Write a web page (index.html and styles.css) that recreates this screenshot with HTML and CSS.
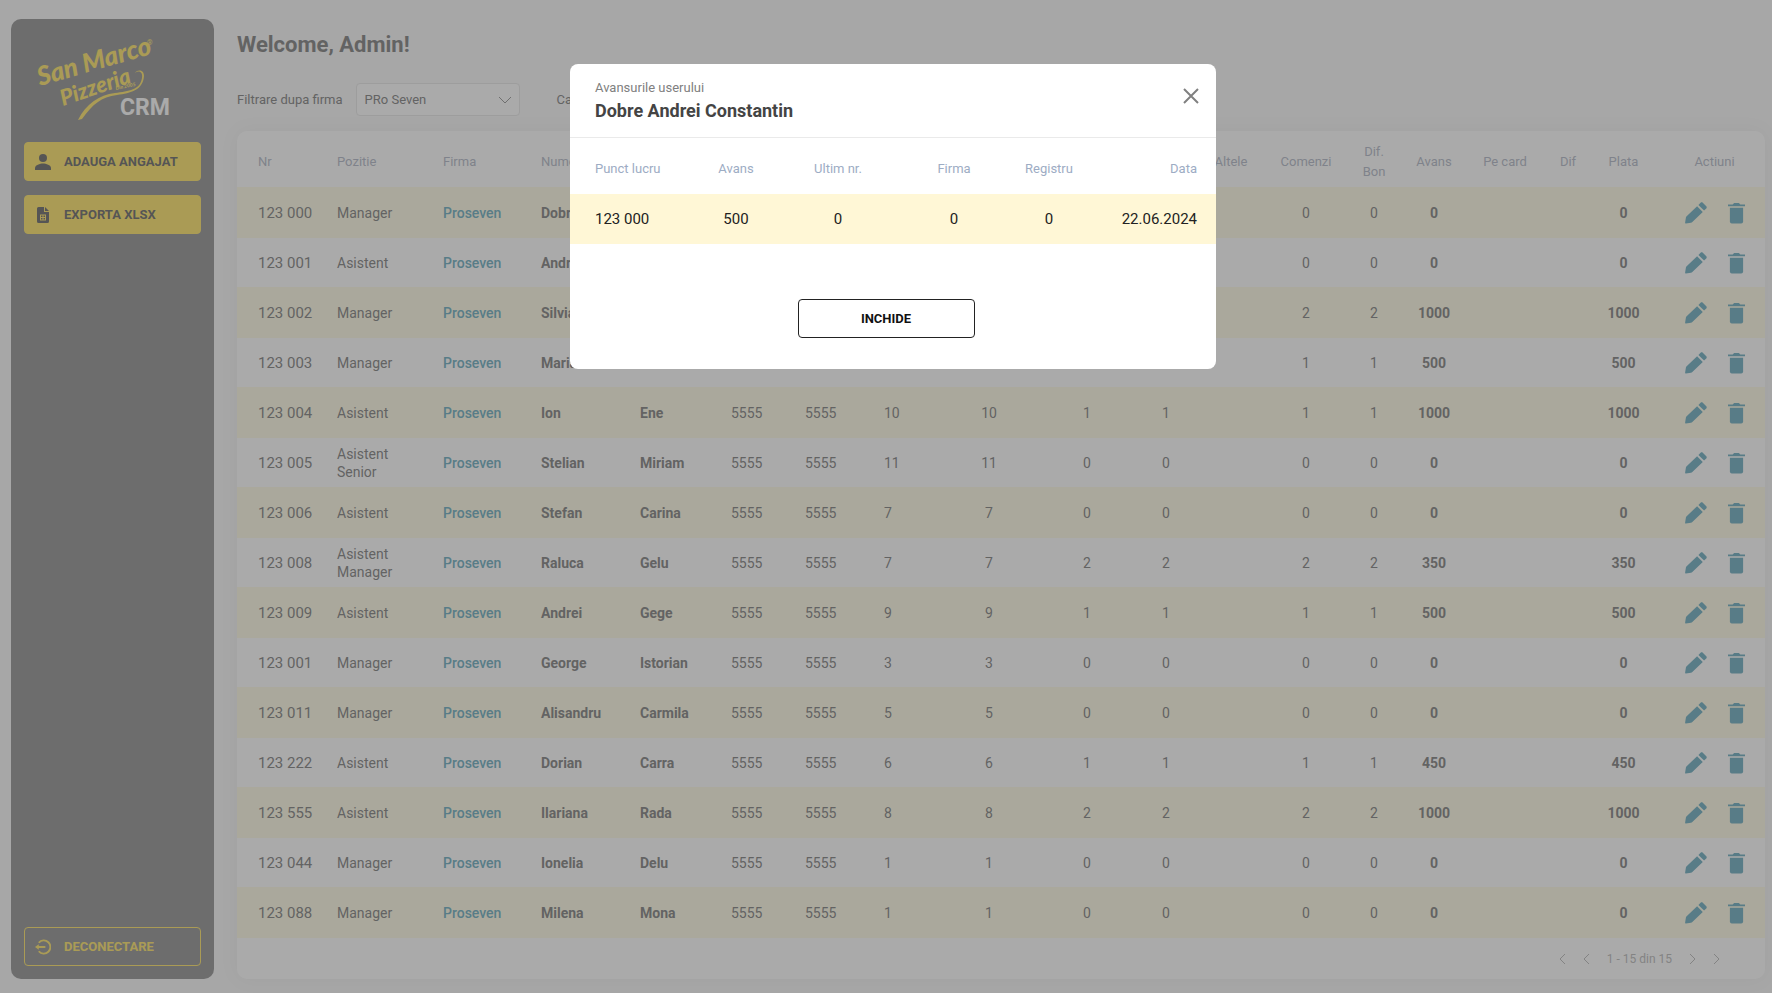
FILE: index.html
```
<!DOCTYPE html>
<html lang="ro">
<head>
  <meta charset="UTF-8" />
  <meta name="viewport" content="width=device-width, initial-scale=1.0"/>
  <title>San Marco Pizzeria CRM</title>
  <link rel="stylesheet" href="styles.css">
</head>
<body>

<!-- Icons -->
<svg class="sprite" aria-hidden="true">
  <symbol id="pencil" viewBox="0 0 24 24">
    <path d="M1 23.500c-.6.100-1-.3-.9-.9l.9-5.600c.1-.6.400-1.100.8-1.500L13.200 4.600l6.200 6.200L8 21.700c-.4.400-.9.700-1.500.8z"/>
    <path d="M14.600 3.200 17 .800c.7-.7 1.700-.7 2.400 0L23.200 4.600c.7.700.7 1.700 0 2.400l-2.400 2.400z"/>
  </symbol>
  <symbol id="trash" viewBox="0 0 18 23">
    <path d="M0 2.500h5l1.400-1.700h5.200L13 2.500h5v1.800H0z"/>
    <path d="M2 6h14v14.500a2 2 0 0 1-2 2H4a2 2 0 0 1-2-2z"/>
  </symbol>
</svg>

<div class="layout">

  <!-- Sidebar -->
  <aside class="sidebar">
    <svg class="logo" viewBox="0 0 145 90" role="img" aria-label="San Marco Pizzeria CRM">
      <text class="script big" transform="translate(10 52) rotate(-16)">San Marco</text>
      <text class="script small" transform="translate(33 72) rotate(-19)">Pizzeria</text>
      <text class="script tiny" transform="translate(86 56) rotate(-12)">Din 2005</text>
      <text class="reg" x="117" y="11">®</text>
      <path class="swoosh" d="M48 86c8-16 21-25 37-27 14-2 25-3 27-15 1-6-3-8-7-5 3-4 9-3 9 3-1 14-13 17-27 19-16 2-24 9-35 24z"/>
      <text class="crm" x="90" y="81">CRM</text>
    </svg>

    <button class="side-btn" type="button">
      <svg width="16" height="16" viewBox="0 0 16 16"><circle cx="8" cy="4" r="4"/><path d="M0 16v-2c0-3 5-4.500 8-4.500s8 1.500 8 4.500v2z"/></svg>
      Adauga angajat
    </button>
    <button class="side-btn" type="button">
      <svg width="16" height="16" viewBox="0 0 16 16"><path fill-rule="evenodd" d="M3.500 0H9v5h5v9.500a1.500 1.500 0 0 1-1.500 1.500h-9A1.500 1.500 0 0 1 2 14.500v-13A1.500 1.500 0 0 1 3.500 0zM5 7.500v6h6v-6zM6 8.500h1.500v1.500H6zM8.500 8.500H10v1.500H8.500zM6 11h1.500v1.500H6zM8.500 11H10v1.500H8.500z"/><path d="M10 0l4 4h-4z"/></svg>
      Exporta xlsx
    </button>

    <button class="side-btn logout" type="button">
      <svg width="16" height="16" viewBox="0 0 17 16"><path class="line" d="M4 3.500a7 7 0 1 1 0 9M3 8h8"/><path d="M0 8l4-3v6z"/></svg>
      Deconectare
    </button>
  </aside>

  <!-- Content -->
  <main class="content">
    <h1>Welcome, Admin!</h1>

    <form class="filters">
      <label for="firma">Filtrare dupa firma</label>
      <select id="firma">
        <option>PRo Seven</option>
      </select>
      <label class="search-label" for="cauta">Cauta</label>
      <input type="text" id="cauta" />
    </form>

    <div class="card">
      <table class="staff">
        <colgroup>
          <col class="w100"><col class="w106"><col class="w98"><col class="w99"><col class="w91">
          <col class="w74"><col class="w79"><col class="w55"><col class="w100"><col class="w96">
          <col class="w62"><col class="w68"><col class="w82"><col class="w54"><col class="w66">
          <col class="w76"><col class="w50"><col class="w61"><col class="w111">
        </colgroup>
        <thead>
          <tr>
            <th>Nr</th><th>Pozitie</th><th>Firma</th><th>Nume</th><th>Prenume</th>
            <th>Salariu</th><th>Norma</th><th>Zile</th><th>Lucrate</th><th>Bonus</th>
            <th>Bon</th><th>Altele</th><th>Comenzi</th><th>Dif.<br>Bon</th><th>Avans</th>
            <th>Pe card</th><th>Dif</th><th>Plata</th><th>Actiuni</th>
          </tr>
        </thead>
        <tbody id="staffRows"></tbody>
      </table>

      <nav class="pager" aria-label="Pagini">
        <button type="button" aria-label="Prima pagina"><svg width="7" height="12" viewBox="0 0 7 12"><path d="M6 1L1 6l5 5"/></svg></button>
        <button type="button" aria-label="Pagina anterioara"><svg width="7" height="12" viewBox="0 0 7 12"><path d="M6 1L1 6l5 5"/></svg></button>
        <span>1 - 15 din 15</span>
        <button type="button" aria-label="Pagina urmatoare"><svg width="7" height="12" viewBox="0 0 7 12"><path d="M1 1l5 5-5 5"/></svg></button>
        <button type="button" aria-label="Ultima pagina"><svg width="7" height="12" viewBox="0 0 7 12"><path d="M1 1l5 5-5 5"/></svg></button>
      </nav>
    </div>
  </main>

</div>

<!-- Modal -->
<div class="overlay" id="overlay">
  <div class="modal" role="dialog" aria-labelledby="modalTitle">
    <div class="modal-header">
      <div>
        <p>Avansurile userului</p>
        <h2 id="modalTitle">Dobre Andrei Constantin</h2>
      </div>
      <button class="close" type="button" aria-label="Inchide" onclick="closeModal()">
        <svg width="14" height="14" viewBox="0 0 14 14"><path d="M0 0l14 14M14 0L0 14"/></svg>
      </button>
    </div>
    <table class="advances">
      <colgroup>
        <col class="w130"><col class="w72"><col class="w132"><col class="w100"><col class="w90"><col class="w122">
      </colgroup>
      <thead>
        <tr><th>Punct lucru</th><th>Avans</th><th>Ultim nr.</th><th>Firma</th><th>Registru</th><th>Data</th></tr>
      </thead>
      <tbody>
        <tr><td>123 000</td><td>500</td><td>0</td><td>0</td><td>0</td><td>22.06.2024</td></tr>
      </tbody>
    </table>
    <div class="modal-footer">
      <button type="button" onclick="closeModal()">Inchide</button>
    </div>
  </div>
</div>

<script>
  // nr, pozitie, nume, prenume, zile, bonus, avans
  const staff = [
    ["123 000", "Manager", "Dobre", "Andrei", 10, 0, 0],
    ["123 001", "Asistent", "Andrei", "Ioana", 10, 0, 0],
    ["123 002", "Manager", "Silvia", "Popa", 10, 2, 1000],
    ["123 003", "Manager", "Maria", "Dinu", 10, 1, 500],
    ["123 004", "Asistent", "Ion", "Ene", 10, 1, 1000],
    ["123 005", "Asistent Senior", "Stelian", "Miriam", 11, 0, 0],
    ["123 006", "Asistent", "Stefan", "Carina", 7, 0, 0],
    ["123 008", "Asistent Manager", "Raluca", "Gelu", 7, 2, 350],
    ["123 009", "Asistent", "Andrei", "Gege", 9, 1, 500],
    ["123 001", "Manager", "George", "Istorian", 3, 0, 0],
    ["123 011", "Manager", "Alisandru", "Carmila", 5, 0, 0],
    ["123 222", "Asistent", "Dorian", "Carra", 6, 1, 450],
    ["123 555", "Asistent", "Ilariana", "Rada", 8, 2, 1000],
    ["123 044", "Manager", "Ionelia", "Delu", 1, 0, 0],
    ["123 088", "Manager", "Milena", "Mona", 1, 0, 0]
  ];

  const staffRows = document.getElementById("staffRows");
  staff.forEach(([nr, pozitie, nume, prenume, zile, bonus, avans]) => {
    const tr = document.createElement("tr");
    tr.innerHTML = `
      <td>${nr}</td><td>${pozitie}</td><td><a href="#">Proseven</a></td>
      <td><b>${nume}</b></td><td><b>${prenume}</b></td>
      <td>5555</td><td>5555</td><td>${zile}</td><td>${zile}</td>
      <td>${bonus}</td><td>${bonus}</td><td></td><td>${bonus}</td><td>${bonus}</td>
      <td><b>${avans}</b></td><td></td><td></td><td><b>${avans}</b></td>
      <td><div class="actions">
        <button type="button" aria-label="Editeaza"><svg width="22" height="22"><use href="#pencil"/></svg></button>
        <button type="button" aria-label="Sterge"><svg width="17" height="22"><use href="#trash"/></svg></button>
      </div></td>`;
    staffRows.appendChild(tr);
  });

  function closeModal() {
    document.getElementById("overlay").hidden = true;
  }
</script>

</body>
</html>
```
FILE: styles.css
```
* {
  box-sizing: border-box;
}
body {
  margin: 0;
  font-family: Roboto, sans-serif;
  font-size: 14px;
  background: #f8f8f8;
  color: #707070;
}
button {
  font-family: inherit;
  cursor: pointer;
}
.sprite {
  display: none;
}
.layout {
  display: flex;
  gap: 23px;
  min-height: 100vh;
  padding: 19px 7px 14px 11px;
}

/* Sidebar */
.sidebar {
  display: flex;
  flex-direction: column;
  gap: 14px;
  flex: 0 0 203px;
  padding: 15px 13px 13px;
  background: #858585;
  border-radius: 10px;
}
.logo {
  width: 145px;
  height: 90px;
  margin: 0 0 4px 6px;
  overflow: visible;
  fill: #ffe155;
}
.script {
  font-family: Lato, sans-serif;
  font-style: italic;
  font-weight: 900;
}
.big {
  font-size: 26px;
}
.small {
  font-size: 22px;
}
.tiny {
  font-size: 5px;
}
.reg {
  font-size: 7px;
}
.crm {
  font-size: 23px;
  font-weight: bold;
  fill: #fff;
}
.side-btn {
  display: flex;
  align-items: center;
  gap: 13px;
  height: 39px;
  padding: 0 10px;
  border: 1px solid #ffe155;
  border-radius: 4px;
  background: #ffe155;
  color: #555;
  fill: #555;
  font-size: 13px;
  font-weight: bold;
  text-transform: uppercase;
}
.logout {
  margin-top: auto;
  background: none;
  color: #ffe155;
  fill: #ffe155;
}
.line {
  fill: none;
  stroke: #ffe155;
  stroke-width: 2;
}

/* Content */
.content {
  flex: 1;
  min-width: 0;
  display: flex;
  flex-direction: column;
}
h1 {
  margin: 11px 0 23px;
  font-size: 22px;
  line-height: 30px;
}
.filters {
  display: flex;
  align-items: center;
  height: 33px;
  margin-bottom: 15px;
}
.filters label {
  font-size: 13px;
}
.filters select, .filters input {
  height: 33px;
  margin-left: 13px;
  padding: 0 8px;
  border: 1px solid #e4e4e4;
  border-radius: 4px;
  background: #fff;
  font-family: inherit;
  font-size: 13px;
  color: #707070;
}
.filters select {
  width: 164px;
  appearance: none;
  background: #fff url("data:image/svg+xml,%3Csvg xmlns='http://www.w3.org/2000/svg' width='14' height='8' fill='none' stroke='%23888' stroke-width='1'%3E%3Cpath d='M1 1l6 6 6-6'/%3E%3C/svg%3E") no-repeat right 7px center;
}
.filters .search-label {
  margin-left: 37px;
}
.card {
  flex: 1;
  display: flex;
  flex-direction: column;
  background: #fff;
  border-radius: 10px;
  box-shadow: 0 0 20px rgba(0,0,0,0.05);
}
table {
  width: 100%;
  table-layout: fixed;
  border-collapse: collapse;
}
th, td {
  padding: 0;
  text-align: center;
}
th {
  height: 56px;
  padding-top: 5px;
  color: #a9afc0;
  font-size: 13px;
  font-weight: normal;
  line-height: 20px;
}
.staff tr > :nth-child(-n+8) {
  text-align: left;
}
.staff tr > :first-child {
  padding-left: 21px;
}
.staff tr > :last-child {
  padding-left: 10px;
}
.staff td {
  height: 49px;
  line-height: 18px;
}
.staff td:first-child {
  font-size: 15px;
}
.staff td:nth-child(2) {
  padding-right: 30px;
}
.staff tbody tr:nth-child(odd) td {
  height: 51px;
  background: #fffbe2;
}
.staff a {
  color: #5aa3b8;
  font-weight: 500;
  text-decoration: none;
}
.actions {
  display: flex;
  justify-content: center;
  gap: 21px;
}
.actions button, .pager button, .close {
  display: flex;
  padding: 0;
  border: none;
  background: none;
}
.actions svg {
  fill: #5aa3b8;
}
.pager {
  display: flex;
  flex: 1;
  align-items: center;
  justify-content: flex-end;
  gap: 17px;
  padding-right: 45px;
  color: #b0b0b0;
  font-size: 12px;
}
.pager svg, .close svg {
  fill: none;
  stroke: #b0b0b0;
}

/* Modal */
.overlay {
  position: fixed;
  inset: 0;
  padding: 64px 0 0 14px;
  background: rgba(85,85,85,0.5);
}
.overlay[hidden] {
  display: none;
}
.modal {
  max-width: 646px;
  margin: 0 auto;
  background: #fff;
  border-radius: 8px;
  color: #222;
}
.modal-header {
  display: flex;
  justify-content: space-between;
  padding: 14px 18px 13px 25px;
  border-bottom: 1px solid #eaeaea;
}
.modal-header p {
  margin: 0;
  font-size: 13px;
  line-height: 20px;
  color: #808080;
}
.modal-header h2 {
  margin: 0;
  font-size: 18px;
  line-height: 26px;
  color: #444;
}
.close {
  align-self: flex-start;
  margin-top: 11px;
}
.close svg {
  overflow: visible;
  stroke: #808080;
  stroke-width: 2;
}
.advances th {
  color: #9dacc4;
}
.advances td {
  height: 50px;
  background: #fff7d6;
  font-size: 15px;
}
.advances tr > :first-child {
  padding-left: 25px;
  text-align: left;
}
.advances tr > :last-child {
  padding-right: 19px;
  text-align: right;
}
.modal-footer {
  display: flex;
  justify-content: center;
  padding: 55px 14px 31px 0;
}
.modal-footer button {
  width: 177px;
  height: 39px;
  border: 1px solid #222;
  border-radius: 4px;
  background: #fff;
  color: #111;
  font-size: 13px;
  font-weight: bold;
  text-transform: uppercase;
}

/* Column widths */
.w50 { width: 50px; }
.w54 { width: 54px; }
.w55 { width: 55px; }
.w61 { width: 61px; }
.w62 { width: 62px; }
.w66 { width: 66px; }
.w68 { width: 68px; }
.w72 { width: 72px; }
.w74 { width: 74px; }
.w76 { width: 76px; }
.w79 { width: 79px; }
.w82 { width: 82px; }
.w90 { width: 90px; }
.w91 { width: 91px; }
.w96 { width: 96px; }
.w98 { width: 98px; }
.w99 { width: 99px; }
.w100 { width: 100px; }
.w106 { width: 106px; }
.w111 { width: 111px; }
.w122 { width: 122px; }
.w130 { width: 130px; }
.w132 { width: 132px; }
```
